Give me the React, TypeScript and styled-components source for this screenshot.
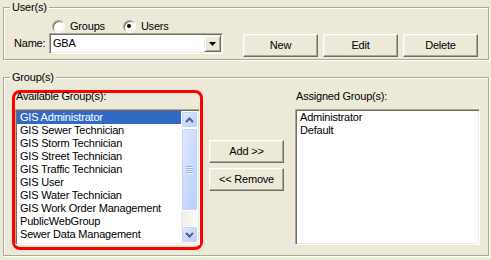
import styled, { createGlobalStyle } from 'styled-components'

const AVAILABLE_GROUPS = [
  'GIS Administrator',
  'GIS Sewer Technician',
  'GIS Storm Technician',
  'GIS Street Technician',
  'GIS Traffic Technician',
  'GIS User',
  'GIS Water Technician',
  'GIS Work Order Management',
  'PublicWebGroup',
  'Sewer Data Management',
  'Sewer Field Technician',
]

const ASSIGNED_GROUPS = ['Administrator', 'Default']

// classic 3D palette
const FACE = '#ECE9D8'
const SHADOW = '#ACA899'
const DARK = '#716F64'
const LIGHT = '#F1EFE2'

const GlobalStyle = createGlobalStyle`
  html, body {
    margin: 0;
    background: ${FACE};
  }
  body {
    font-family: "Liberation Sans", Arial, sans-serif;
    font-size: 11px;
    line-height: 13px;
    letter-spacing: -0.2px;
    color: #000;
  }
`

const Window = styled.div`
  width: 491px;
  height: 260px;
  box-sizing: border-box;
  padding: 1px 2px 0 3px;
  display: flex;
  flex-direction: column;
  gap: 11px;
  overflow: hidden;
`

const GroupBox = styled.fieldset`
  margin: 0;
  padding: 0;
  min-width: 0;
  border: 1px solid ${SHADOW};
  box-shadow: 1px 1px 0 #fff, inset 1px 1px 0 #fff;
`

const Caption = styled.legend`
  margin-left: 6px;
  padding: 0 2px;
  height: 13px;
  background: ${FACE};
`

const UsersBody = styled.div`
  padding: 0 10px 2px 10px;
`

const RadioRow = styled.div`
  display: flex;
  align-items: center;
  gap: 18px;
  height: 14px;
  margin-top: 5px;
  padding-left: 38px;
`

const RadioOption = styled.label`
  display: inline-flex;
  align-items: center;
  gap: 5px;
`

const RadioCircle = styled.span<{ $checked?: boolean }>`
  width: 13px;
  height: 13px;
  box-sizing: border-box;
  border-radius: 50%;
  background: #fff;
  border: 1px solid;
  border-color: ${SHADOW} #fff #fff ${SHADOW};
  box-shadow: inset 1px 1px 0 ${DARK}, inset -1px -1px 0 ${LIGHT};
  display: flex;
  align-items: center;
  justify-content: center;

  &::after {
    content: '';
    width: 4px;
    height: 4px;
    border-radius: 50%;
    background: ${(p) => (p.$checked ? '#000' : 'transparent')};
  }
`

const NameRow = styled.div`
  display: flex;
  align-items: flex-start;
  height: 24px;
`

const FieldLabel = styled.span`
  width: 35px;
  line-height: 21px;
`

const Combo = styled.div`
  display: flex;
  align-items: center;
  width: 174px;
  height: 21px;
  box-sizing: border-box;
  padding: 1px;
  background: #fff;
  border: 1px solid;
  border-color: ${SHADOW} #fff #fff ${SHADOW};
  box-shadow: inset 1px 1px 0 ${DARK}, inset -1px -1px 0 ${LIGHT};
`

const ComboText = styled.span`
  flex: 1;
  padding-left: 2px;
`

const DropButton = styled.span`
  width: 17px;
  height: 17px;
  box-sizing: border-box;
  background: ${FACE};
  border: 1px solid;
  border-color: ${LIGHT} ${DARK} ${DARK} ${LIGHT};
  box-shadow: inset 1px 1px 0 #fff, inset -1px -1px 0 ${SHADOW};
  display: flex;
  align-items: center;
  justify-content: center;
`

const ButtonGroup = styled.div`
  display: flex;
  gap: 5px;
  margin-left: auto;
  margin-top: 1px;
`

const Button = styled.button`
  width: 75px;
  height: 23px;
  box-sizing: border-box;
  margin: 0;
  padding: 0;
  font: inherit;
  letter-spacing: inherit;
  color: #000;
  background: ${FACE};
  border: 1px solid;
  border-color: #fff ${DARK} ${DARK} #fff;
  box-shadow: inset -1px -1px 0 ${SHADOW}, inset 1px 1px 0 ${LIGHT};
`

const GroupsBody = styled.div`
  display: flex;
  align-items: flex-start;
  padding: 6px 7px 5px 8px;
`

const HighlightFrame = styled.div`
  width: 191px;
  height: 160px;
  box-sizing: border-box;
  border: 3px solid #ff0000;
  border-radius: 8px;
  display: flex;
  flex-direction: column;
`

const ListColumn = styled.div`
  width: 185px;
  margin-left: 11px;
  display: flex;
  flex-direction: column;
`

const ListLabel = styled.div<{ $inFrame?: boolean }>`
  height: 19px;
  margin-top: ${(p) => (p.$inFrame ? '-3px' : '0')};
  padding-left: 1px;
`

const MoveButtons = styled.div`
  display: flex;
  flex-direction: column;
  gap: 5px;
  margin-left: 6px;
  padding-top: 50px;
`

const ListBox = styled.div`
  display: flex;
  width: 185px;
  height: 136px;
  box-sizing: border-box;
  padding: 1px;
  background: #fff;
  border: 1px solid;
  border-color: ${SHADOW} #fff #fff ${SHADOW};
  box-shadow: inset 1px 1px 0 ${DARK}, inset -1px -1px 0 ${LIGHT};
  overflow: hidden;
`

const Items = styled.div`
  flex: 1;
  overflow: hidden;
`

const Item = styled.div<{ $selected?: boolean }>`
  height: 13px;
  padding-left: 3px;
  white-space: nowrap;
  background: ${(p) => (p.$selected ? '#316AC5' : 'transparent')};
  color: ${(p) => (p.$selected ? '#fff' : '#000')};
`

const ScrollBar = styled.div`
  width: 17px;
  display: flex;
  flex-direction: column;
  background: linear-gradient(to right, #EEEDE5, #FDFDFA);
`

const ScrollButton = styled.div`
  height: 17px;
  box-sizing: border-box;
  border: 1px solid #fff;
  border-radius: 2px;
  background: linear-gradient(to bottom right, #E2EBFE, #B7CCF8);
  box-shadow: inset 0 0 0 1px #C3D4FA;
  display: flex;
  align-items: center;
  justify-content: center;
`

const ScrollThumb = styled(ScrollButton)`
  height: 83px;
  flex-direction: column;
  gap: 1px;
`

const GripLine = styled.span`
  width: 7px;
  height: 1px;
  background: #8CAEF3;
  box-shadow: 0 1px 0 #EEF4FE;
`

const ScrollTrack = styled.div`
  flex: 1;
`

function Chevron({ up }: { up?: boolean }) {
  return (
    <svg width="9" height="6" viewBox="0 0 9 6">
      <path
        d={up ? 'M1 5 L4.5 1.5 L8 5' : 'M1 1 L4.5 4.5 L8 1'}
        fill="none"
        stroke="#4D6185"
        strokeWidth="2"
      />
    </svg>
  )
}

function VScroll() {
  return (
    <ScrollBar>
      <ScrollButton>
        <Chevron up />
      </ScrollButton>
      <ScrollThumb>
        <GripLine />
        <GripLine />
        <GripLine />
        <GripLine />
      </ScrollThumb>
      <ScrollTrack />
      <ScrollButton>
        <Chevron />
      </ScrollButton>
    </ScrollBar>
  )
}

export default function App() {
  return (
    <>
      <GlobalStyle />
      <Window>
        <GroupBox>
          <Caption>User(s)</Caption>
          <UsersBody>
            <RadioRow>
              <RadioOption>
                <RadioCircle />
                Groups
              </RadioOption>
              <RadioOption>
                <RadioCircle $checked />
                Users
              </RadioOption>
            </RadioRow>
            <NameRow>
              <FieldLabel>Name:</FieldLabel>
              <Combo>
                <ComboText>GBA</ComboText>
                <DropButton>
                  <svg width="7" height="4" viewBox="0 0 7 4">
                    <path d="M0 0 H7 L3.5 4 Z" fill="#000" />
                  </svg>
                </DropButton>
              </Combo>
              <ButtonGroup>
                <Button>New</Button>
                <Button>Edit</Button>
                <Button>Delete</Button>
              </ButtonGroup>
            </NameRow>
          </UsersBody>
        </GroupBox>

        <GroupBox>
          <Caption>Group(s)</Caption>
          <GroupsBody>
            <HighlightFrame>
              <ListLabel $inFrame>Available Group(s):</ListLabel>
              <ListBox>
                <Items>
                  {AVAILABLE_GROUPS.map((g, i) => (
                    <Item key={g} $selected={i === 0}>
                      {g}
                    </Item>
                  ))}
                </Items>
                <VScroll />
              </ListBox>
            </HighlightFrame>
            <MoveButtons>
              <Button>Add &gt;&gt;</Button>
              <Button>&lt;&lt; Remove</Button>
            </MoveButtons>
            <ListColumn>
              <ListLabel>Assigned Group(s):</ListLabel>
              <ListBox>
                <Items>
                  {ASSIGNED_GROUPS.map((g) => (
                    <Item key={g}>{g}</Item>
                  ))}
                </Items>
              </ListBox>
            </ListColumn>
          </GroupsBody>
        </GroupBox>
      </Window>
    </>
  )
}
